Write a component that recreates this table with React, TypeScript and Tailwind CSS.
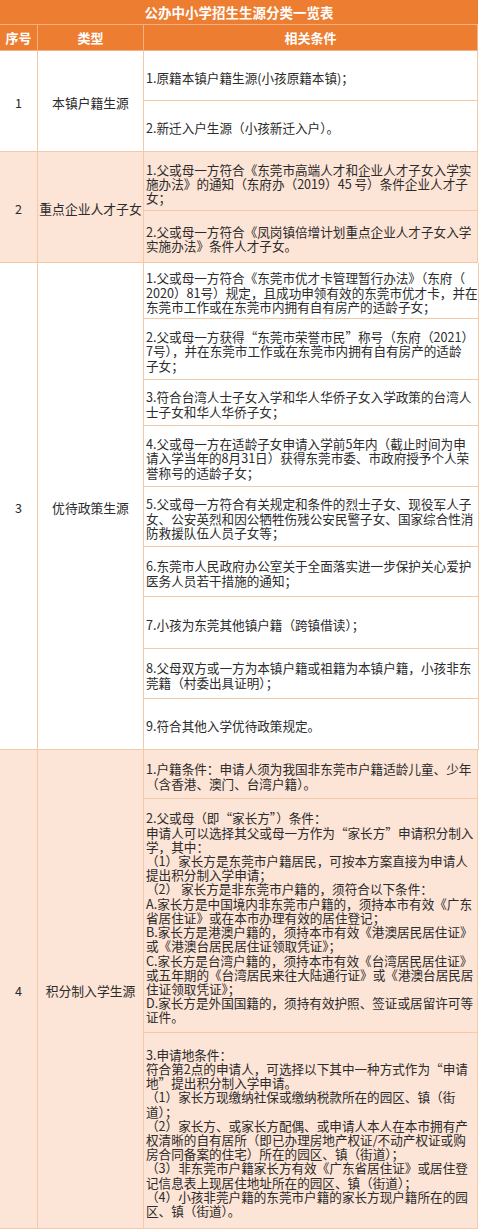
import React from 'react';

type Cell = { h: string; lines: string[] };
type Row = { no: string; type: string; bg: string; cells: Cell[]; lead: string };

const rows: Row[] = [
  {
    no: '1',
    type: '本镇户籍生源',
    bg: 'bg-white',
    lead: 'leading-[14.2px]',
    cells: [
      { h: 'h-[50px]', lines: ['1.原籍本镇户籍生源(小孩原籍本镇)；'] },
      { h: 'h-[51px]', lines: ['2.新迁入户生源（小孩新迁入户）。'] },
    ],
  },
  {
    no: '2',
    type: '重点企业人才子女',
    bg: 'bg-[#fce4d6]',
    lead: 'leading-[14px]',
    cells: [
      {
        h: 'h-[59px]',
        lines: [
          '1.父或母一方符合《东莞市高端人才和企业人才子女入学实',
          '施办法》的通知（东府办（2019）45 号）条件企业人才子',
          '女；',
        ],
      },
      {
        h: 'h-[52px]',
        lines: ['2.父或母一方符合《凤岗镇倍增计划重点企业人才子女入学', '实施办法》条件人才子女。'],
      },
    ],
  },
  {
    no: '3',
    type: '优待政策生源',
    bg: 'bg-white',
    lead: 'leading-[14.6px]',
    cells: [
      {
        h: 'h-[56px]',
        lines: [
          '1.父或母一方符合《东莞市优才卡管理暂行办法》（东府（',
          '2020）81号）规定，且成功申领有效的东莞市优才卡，并在',
          '东莞市工作或在东莞市内拥有自有房产的适龄子女；',
        ],
      },
      {
        h: 'h-[61px]',
        lines: [
          '2.父或母一方获得“东莞市荣誉市民”称号（东府（2021）',
          '7号），并在东莞市工作或在东莞市内拥有自有房产的适龄',
          '子女；',
        ],
      },
      {
        h: 'h-[46px]',
        lines: ['3.符合台湾人士子女入学和华人华侨子女入学政策的台湾人', '士子女和华人华侨子女；'],
      },
      {
        h: 'h-[61px]',
        lines: [
          '4.父或母一方在适龄子女申请入学前5年内（截止时间为申',
          '请入学当年的8月31日）获得东莞市委、市政府授予个人荣',
          '誉称号的适龄子女；',
        ],
      },
      {
        h: 'h-[60px]',
        lines: [
          '5.父或母一方符合有关规定和条件的烈士子女、现役军人子',
          '女、公安英烈和因公牺牲伤残公安民警子女、国家综合性消',
          '防救援队伍人员子女等；',
        ],
      },
      {
        h: 'h-[50px]',
        lines: ['6.东莞市人民政府办公室关于全面落实进一步保护关心爱护', '医务人员若干措施的通知；'],
      },
      { h: 'h-[52px]', lines: ['7.小孩为东莞其他镇户籍（跨镇借读）；'] },
      {
        h: 'h-[50px]',
        lines: ['8.父母双方或一方为本镇户籍或祖籍为本镇户籍，小孩非东', '莞籍（村委出具证明）；'],
      },
      { h: 'h-[51px]', lines: ['9.符合其他入学优待政策规定。'] },
    ],
  },
  {
    no: '4',
    type: '积分制入学生源',
    bg: 'bg-[#fce4d6]',
    lead: 'leading-[14.2px]',
    cells: [
      {
        h: 'h-[49px]',
        lines: ['1.户籍条件：申请人须为我国非东莞市户籍适龄儿童、少年', '（含香港、澳门、台湾户籍）。'],
      },
      {
        h: 'h-[234px]',
        lines: [
          '2.父或母（即“家长方”）条件：',
          '申请人可以选择其父或母一方作为“家长方”申请积分制入',
          '学，其中：',
          '（1）家长方是东莞市户籍居民，可按本方案直接为申请人',
          '提出积分制入学申请；',
          '（2） 家长方是非东莞市户籍的，须符合以下条件：',
          'A.家长方是中国境内非东莞市户籍的，须持本市有效《广东',
          '省居住证》或在本市办理有效的居住登记；',
          'B.家长方是港澳户籍的，须持本市有效《港澳居民居住证》',
          '或《港澳台居民居住证领取凭证》；',
          'C.家长方是台湾户籍的，须持本市有效《台湾居民居住证》',
          '或五年期的《台湾居民来往大陆通行证》或《港澳台居民居',
          '住证领取凭证》；',
          'D.家长方是外国国籍的，须持有效护照、签证或居留许可等',
          '证件。',
        ],
      },
      {
        h: 'h-[196px]',
        lines: [
          '3.申请地条件：',
          '符合第2点的申请人，可选择以下其中一种方式作为“申请',
          '地”提出积分制入学申请。',
          '（1）家长方现缴纳社保或缴纳税款所在的园区、镇（街',
          '道）；',
          '（2）家长方、或家长方配偶、或申请人本人在本市拥有产',
          '权清晰的自有居所（即已办理房地产权证/不动产权证或购',
          '房合同备案的住宅）所在的园区、镇（街道）；',
          '（3）非东莞市户籍家长方有效《广东省居住证》或居住登',
          '记信息表上现居住地址所在的园区、镇（街道）；',
          '（4）小孩非莞户籍的东莞市户籍的家长方现户籍所在的园',
          '区、镇（街道）。',
        ],
      },
    ],
  },
];

export default function App() {
  return (
    <div className="w-[479px] bg-white font-['Noto_Sans_CJK_SC','Liberation_Sans',sans-serif] text-[12.6px] text-[#2b2b2b]">
      <div className="w-[478px]">
        <div className="flex h-[25px] items-center justify-center border-b border-[#f4b183] bg-[#ed7d31] text-[13.5px] font-bold text-white">
          公办中小学招生生源分类一览表
        </div>
        <div className="flex h-[26px] border-b border-[#f4b183] bg-[#ed7d31] text-[13px] font-bold text-white">
          <div className="flex w-[38px] shrink-0 items-center justify-center border-r border-[#f4b183]">序号</div>
          <div className="flex w-[106px] shrink-0 items-center justify-center border-r border-[#f4b183]">类型</div>
          <div className="flex flex-1 items-center justify-center border-r border-[#f4b183]">相关条件</div>
        </div>
        {rows.map((r) => (
          <div key={r.no} className={`flex ${r.bg}`}>
            <div className="flex w-[38px] shrink-0 items-center justify-center border-r border-b border-[#f4c9a8] pt-[4px]">
              {r.no}
            </div>
            <div className="flex w-[106px] shrink-0 items-center justify-center whitespace-nowrap border-r border-b border-[#f4c9a8] pt-[4px] text-[12.8px]">
              {r.type}
            </div>
            <div className="flex flex-1 flex-col">
              {r.cells.map((c, i) => (
                <div
                  key={i}
                  className={`flex ${c.h} flex-col justify-center border-r border-b border-[#f4c9a8] pl-[2px] pt-[5px] ${r.lead}`}
                >
                  {c.lines.map((l, j) => (
                    <div key={j} className="whitespace-nowrap">
                      {l}
                    </div>
                  ))}
                </div>
              ))}
            </div>
          </div>
        ))}
      </div>
    </div>
  );
}
